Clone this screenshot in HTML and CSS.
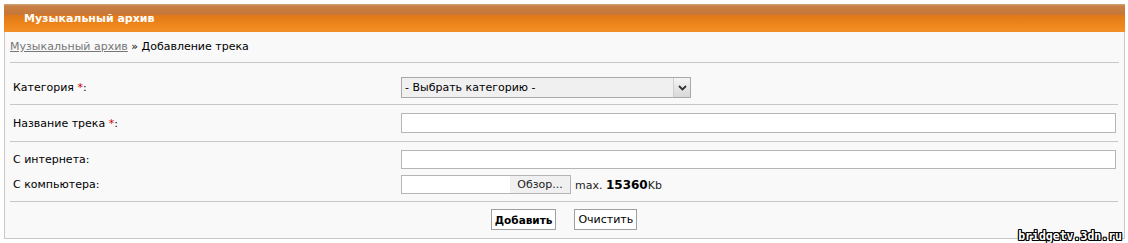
FILE: index.html
```html
<!DOCTYPE html>
<html lang="ru">
<head>
    <meta charset="UTF-8">
    <title>Музыкальный архив</title>
    <link rel="stylesheet" href="styles.css">
</head>
<body>

<div class="box">
    <div class="box-title">Музыкальный архив</div>
    <div class="box-body">
        <div class="crumbs">
            <a href="#">Музыкальный архив</a> &raquo; Добавление трека
        </div>

        <form class="track-form">
            <div class="form-row row-first">
                <div class="label">Категория <span class="req">*</span>:</div>
                <div class="field">
                    <div class="select-wrap">
                        <select class="cat-select">
                            <option>- Выбрать категорию -</option>
                        </select>
                        <span class="select-arrow">
                            <svg width="9" height="6" viewBox="0 0 9 6"><path d="M1 1 L4.5 4.5 L8 1" fill="none" stroke="#333" stroke-width="1.8"/></svg>
                        </span>
                    </div>
                </div>
            </div>

            <div class="form-row">
                <div class="label">Название трека <span class="req">*</span>:</div>
                <div class="field"><input type="text" class="text-input"></div>
            </div>

            <div class="form-row row-double">
                <div class="label">С интернета:</div>
                <div class="field"><input type="text" class="text-input small"></div>
                <div class="label">С компьютера:</div>
                <div class="field file-field">
                    <div class="file-input">
                        <span class="file-name"></span>
                        <span class="file-btn">Обзор...</span>
                    </div>
                    <span class="max-size">max. <b>15360</b>Kb</span>
                </div>
            </div>

            <div class="form-buttons">
                <button type="button" class="btn btn-main">Добавить</button>
                <button type="reset" class="btn">Очистить</button>
            </div>
        </form>
    </div>
    <div class="watermark">bridgetv.3dn.ru</div>
</div>

</body>
</html>
```

FILE: styles.css
```css
body {
    margin: 0;
    padding: 4px 3px 4px 4px;
    background: #fff;
    font-family: "DejaVu Sans", Verdana, sans-serif;
    font-size: 11px;
    color: #000;
}
.box {
    position: relative;
    border: 1px solid #c8c8c8;
    border-top: none;
    background: #f9f9f9;
}
.box-title {
    height: 28px;
    line-height: 29px;
    margin: 0 -1px;
    padding-left: 20px;
    color: #fff;
    font-weight: bold;
    font-size: 11px;
    background: linear-gradient(#d3a47a 0%, #c98044 8%, #c5773a 36%, #e07a18 42%, #ef861c 75%, #f39028 100%);
}
.box-body {
    padding: 0 5px 0 5px;
}
.crumbs {
    padding: 8px 0 0 0;
    height: 22px;
    margin-bottom: 1px;
    border-bottom: 1px solid #c8c8c8;
    font-size: 11px;
}
.crumbs a {
    color: #777;
}
.track-form {
    margin: 0 1px 0 0;
}
.form-row {
    display: grid;
    grid-template-columns: 391px 1fr;
    align-items: center;
    padding: 8px 0;
    border-bottom: 1px solid #c8c8c8;
}
.row-first {
    padding: 13px 0 6px;
}
.row-double {
    row-gap: 6px;
    padding: 8px 0 7px;
}
.label {
    padding-left: 3px;
}
.req {
    color: #c00;
}
.field {
    padding-right: 2px;
}
.select-wrap {
    position: relative;
    width: 290px;
    height: 21px;
}
.cat-select {
    appearance: none;
    -webkit-appearance: none;
    width: 100%;
    height: 21px;
    margin: 0;
    padding: 0 0 0 3px;
    border: 1px solid #a9a9a9;
    border-radius: 0;
    background: #f0f0f0;
    font-family: inherit;
    font-size: 11px;
    color: #000;
}
.select-arrow {
    position: absolute;
    right: 1px;
    top: 1px;
    width: 16px;
    height: 19px;
    display: flex;
    align-items: center;
    justify-content: center;
    background: linear-gradient(#f4f4f4, #d8d8d8);
    border-left: 1px solid #d0d0d0;
    pointer-events: none;
}
.text-input {
    display: block;
    box-sizing: border-box;
    width: 100%;
    height: 20px;
    margin: 0;
    border: 1px solid #b5b5b5;
    background: #fff;
}
.text-input.small {
    height: 19px;
}
.file-field {
    display: flex;
    align-items: center;
    gap: 4px;
}
.file-input {
    display: flex;
    width: 170px;
    height: 19px;
    box-sizing: border-box;
    border: 1px solid #b5b5b5;
    background: #fff;
}
.file-name {
    flex: 1;
}
.file-btn {
    width: 60px;
    line-height: 17px;
    text-align: center;
    background: #f0f0f0;
    color: #222;
}
.max-size {
    color: #222;
    font-size: 11px;
}
.max-size b {
    color: #000;
    font-size: 12px;
}
.form-buttons {
    display: flex;
    justify-content: center;
    gap: 18px;
    padding: 7px 0 8px;
}
.btn {
    height: 21px;
    padding: 0 3px;
    border: 1px solid #a0a0a0;
    background: #fff;
    font-family: inherit;
    font-size: 11px;
    color: #000;
}
.btn-main {
    font-weight: bold;
    font-size: 10.5px;
}
.watermark {
    position: absolute;
    right: 2px;
    bottom: -5px;
    font-family: "DejaVu Sans Mono", monospace;
    font-weight: bold;
    font-size: 11.5px;
    color: #fff;
    text-shadow: 1px 0 #000, -1px 0 #000, 0 1px #000, 0 -1px #000, 1px 1px #000, -1px -1px #000, 1px -1px #000, -1px 1px #000;
}
```
